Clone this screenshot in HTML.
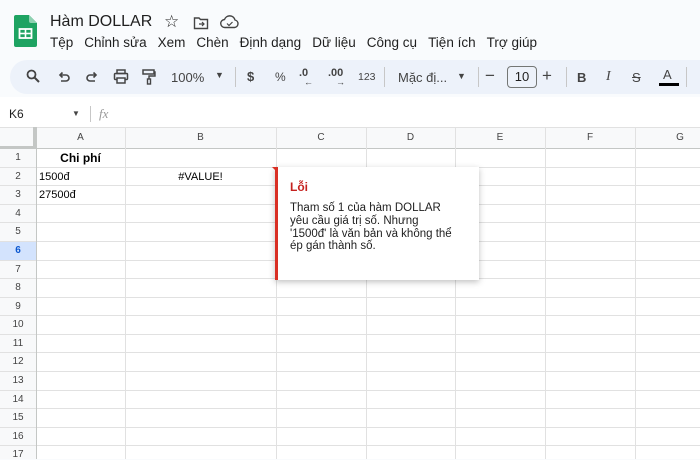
<!DOCTYPE html>
<html><head><meta charset="utf-8"><style>
*{margin:0;padding:0;box-sizing:border-box}
body{width:700px;height:459px;overflow:hidden;background:#f9fbfd;font-family:"Liberation Sans",Arial,sans-serif;color:#1f1f1f;position:relative}
.a{position:absolute;white-space:nowrap}
.menu span{margin-right:11px}
.tb{position:absolute;left:10px;top:60px;width:720px;height:34px;background:#edf2fa;border-radius:17px}
.ic{position:absolute;top:68px}
.sep{position:absolute;top:67px;width:1px;height:20px;background:#c7c7c7}
.grid{position:absolute;left:0;top:127px;width:700px;height:332px;background:#fff}
.hl{position:absolute;left:0;width:700px;height:1px;background:#e1e1e1}
.vl{position:absolute;top:127px;width:1px;height:332px;background:#e1e1e1}
.rn{position:absolute;left:0;width:36px;text-align:center;font-size:10px;color:#444}
.ch{position:absolute;top:132px;font-size:10px;color:#444;text-align:center}
.cell{position:absolute;font-size:11px;color:#000}
</style></head><body>
<svg class="a" style="left:14px;top:15px" width="23" height="32" viewBox="0 0 23 32"><path d="M2 0h13l8 8v22a2 2 0 0 1-2 2H2a2 2 0 0 1-2-2V2a2 2 0 0 1 2-2z" fill="#1ea362"/><path d="M15 0v6a2 2 0 0 0 2 2h6z" fill="#8ed1b1"/><rect x="5.5" y="14" width="12" height="9" fill="none" stroke="#fff" stroke-width="1.8"/><line x1="5.5" y1="18.5" x2="17.5" y2="18.5" stroke="#fff" stroke-width="1.6"/><line x1="11.5" y1="14" x2="11.5" y2="23" stroke="#fff" stroke-width="1.6"/></svg>
<div class="a" style="left:50px;top:13px;font-size:16px;color:#1f1f1f">Hàm DOLLAR</div>
<div class="a" style="left:164px;top:12px;font-size:17px">☆</div>
<svg class="a" style="left:193px;top:16px" width="16" height="14" viewBox="0 0 16 14"><path d="M1.5 2h4.5l1.5 1.5h7v9h-13z" fill="none" stroke="#444" stroke-width="1.4"/><path d="M6 8h5M9 6l2 2-2 2" fill="none" stroke="#444" stroke-width="1.2"/></svg>
<svg class="a" style="left:220px;top:15px" width="19" height="14" viewBox="0 0 19 14"><path d="M5 12.5a4 4 0 0 1-.5-8A5.5 5.5 0 0 1 15 5a3.8 3.8 0 0 1-.5 7.5z" fill="none" stroke="#444" stroke-width="1.4"/><path d="M7 8.5l2 2 3.5-3.5" fill="none" stroke="#444" stroke-width="1.2"/></svg>
<div class="a menu" style="left:50px;top:35px;font-size:13.5px;color:#1f1f1f"><span>Tệp</span><span>Chỉnh sửa</span><span>Xem</span><span>Chèn</span><span>Định dạng</span><span>Dữ liệu</span><span>Công cụ</span><span>Tiện ích</span><span>Trợ giúp</span></div>

<div class="tb"></div>
<svg class="ic" style="left:26px;top:69px" width="15" height="15" viewBox="0 0 15 15"><circle cx="5.5" cy="5.5" r="4" fill="none" stroke="#444" stroke-width="1.8"/><path d="M8.5 8.5l4.5 4.5" stroke="#444" stroke-width="2"/></svg>
<svg class="ic" style="left:57px;top:70px" width="14" height="14" viewBox="0 0 14 14"><path d="M3 5h6a3 3 0 0 1 0 6H4" fill="none" stroke="#444" stroke-width="1.6"/><path d="M5.5 2.5L3 5l2.5 2.5" fill="none" stroke="#444" stroke-width="1.6"/></svg>
<svg class="ic" style="left:85px;top:70px" width="14" height="14" viewBox="0 0 14 14"><path d="M11 5H5a3 3 0 0 0 0 6h5" fill="none" stroke="#444" stroke-width="1.6"/><path d="M8.5 2.5L11 5 8.5 7.5" fill="none" stroke="#444" stroke-width="1.6"/></svg>
<svg class="ic" style="left:113px;top:69px" width="16" height="15" viewBox="0 0 16 15"><rect x="4" y="1" width="8" height="3.5" fill="none" stroke="#444" stroke-width="1.5"/><rect x="1.5" y="4.5" width="13" height="6" rx="1" fill="none" stroke="#444" stroke-width="1.5"/><rect x="4" y="9" width="8" height="5" fill="#edf2fa" stroke="#444" stroke-width="1.5"/></svg>
<svg class="ic" style="left:142px;top:69px" width="14" height="16" viewBox="0 0 14 16"><rect x="1" y="1" width="11" height="4" fill="none" stroke="#444" stroke-width="1.5"/><path d="M12 3h1v4H7v3" fill="none" stroke="#444" stroke-width="1.4"/><rect x="5.5" y="10" width="3" height="5" fill="none" stroke="#444" stroke-width="1.4"/></svg>
<div class="a" style="left:171px;top:70px;font-size:13px;color:#444">100%</div>
<div class="a" style="left:215px;top:70px;font-size:9px;color:#444">▼</div>
<div class="sep" style="left:235px"></div>
<div class="a" style="left:247px;top:69px;font-size:13px;color:#444;font-weight:bold">$</div>
<div class="a" style="left:275px;top:70px;font-size:12px;color:#444">%</div>
<div class="a" style="left:299px;top:67px;font-size:11px;color:#444;font-weight:bold">.0</div>
<div class="a" style="left:304px;top:77px;font-size:9px;color:#444">←</div>
<div class="a" style="left:328px;top:67px;font-size:11px;color:#444;font-weight:bold">.00</div>
<div class="a" style="left:336px;top:77px;font-size:9px;color:#444">→</div>
<div class="a" style="left:358px;top:71px;font-size:10.5px;color:#444">123</div>
<div class="sep" style="left:384px"></div>
<div class="a" style="left:398px;top:70px;font-size:13px;color:#444">Mặc đị...</div>
<div class="a" style="left:457px;top:71px;font-size:9px;color:#444">▼</div>
<div class="sep" style="left:478px"></div>
<div class="a" style="left:485px;top:66px;font-size:17px;color:#444">−</div>
<div class="a" style="left:507px;top:66px;width:30px;height:22px;border:1px solid #747775;border-radius:4px;font-size:13px;color:#1f1f1f;text-align:center;line-height:20px">10</div>
<div class="a" style="left:542px;top:66px;font-size:17px;color:#444">+</div>
<div class="sep" style="left:566px"></div>
<div class="a" style="left:577px;top:70px;font-size:13px;color:#444;font-weight:bold">B</div>
<div class="a" style="left:606px;top:69px;font-size:14px;color:#444;font-style:italic;font-family:'Liberation Serif',serif">I</div>
<div class="a" style="left:632px;top:70px;font-size:13px;color:#444;text-decoration:line-through">S</div>
<div class="a" style="left:663px;top:67px;font-size:13px;color:#444">A</div>
<div class="a" style="left:659px;top:83px;width:20px;height:3px;background:#000"></div>
<div class="sep" style="left:686px"></div>

<div class="a" style="left:0;top:97px;width:700px;height:30px;background:#fff"></div>
<div class="a" style="left:9px;top:107px;font-size:12px;color:#1f1f1f">K6</div>
<div class="a" style="left:72px;top:109px;font-size:8px;color:#444">▼</div>
<div class="a" style="left:90px;top:106px;width:1px;height:16px;background:#c7c7c7"></div>
<div class="a" style="left:99px;top:106px;font-size:13px;color:#999;font-style:italic;font-family:'Liberation Serif',serif">fx</div>

<div class="grid"></div>
<div class="a" style="left:0;top:127px;width:700px;height:21px;background:#f8f9fa"></div>
<div class="a" style="left:0;top:127px;width:36px;height:332px;background:#f8f9fa"></div>
<div class="a" style="left:0;top:241px;width:36px;height:19px;background:#d3e3fd"></div>
<div class="hl" style="top:127px"></div>
<div class="hl" style="top:148px;background:#c4c7c5"></div>
<div class="a" style="left:0;top:127px;width:36px;height:22px;border-right:3px solid #c4c7c5;border-bottom:3px solid #c4c7c5"></div>
<div class="hl" style="top:167px"></div><div class="hl" style="top:185px"></div><div class="hl" style="top:204px"></div><div class="hl" style="top:222px"></div><div class="hl" style="top:241px"></div><div class="hl" style="top:260px"></div><div class="hl" style="top:278px"></div><div class="hl" style="top:297px"></div><div class="hl" style="top:315px"></div><div class="hl" style="top:334px"></div><div class="hl" style="top:352px"></div><div class="hl" style="top:371px"></div><div class="hl" style="top:390px"></div><div class="hl" style="top:408px"></div><div class="hl" style="top:427px"></div><div class="hl" style="top:445px"></div>
<div class="vl" style="left:36px;background:#c4c7c5"></div><div class="vl" style="left:125px"></div><div class="vl" style="left:276px"></div><div class="vl" style="left:366px"></div><div class="vl" style="left:455px"></div><div class="vl" style="left:545px"></div><div class="vl" style="left:635px"></div>
<div class="ch" style="left:36px;width:89px">A</div><div class="ch" style="left:125px;width:151px">B</div><div class="ch" style="left:276px;width:90px">C</div><div class="ch" style="left:366px;width:89px">D</div><div class="ch" style="left:455px;width:90px">E</div><div class="ch" style="left:545px;width:90px">F</div><div class="ch" style="left:635px;width:90px">G</div>
<div class="rn" style="top:152px">1</div><div class="rn" style="top:171px">2</div><div class="rn" style="top:189px">3</div><div class="rn" style="top:208px">4</div><div class="rn" style="top:226px">5</div><div class="rn" style="top:245px;font-weight:bold;color:#0b57d0">6</div><div class="rn" style="top:264px">7</div><div class="rn" style="top:282px">8</div><div class="rn" style="top:301px">9</div><div class="rn" style="top:319px">10</div><div class="rn" style="top:338px">11</div><div class="rn" style="top:356px">12</div><div class="rn" style="top:375px">13</div><div class="rn" style="top:394px">14</div><div class="rn" style="top:412px">15</div><div class="rn" style="top:431px">16</div><div class="rn" style="top:449px">17</div>
<div class="cell" style="left:36px;width:89px;top:151px;text-align:center;font-weight:bold;font-size:12px">Chi phí</div>
<div class="cell" style="left:39px;top:171px">1500đ</div>
<div class="cell" style="left:39px;top:189px">27500đ</div>
<div class="cell" style="left:125px;width:151px;top:171px;text-align:center">#VALUE!</div>

<div class="a" style="left:275px;top:167px;width:204px;height:113px;background:#fff;border-left:3px solid #d93025;box-shadow:0 2px 6px rgba(0,0,0,.25)"></div>
<svg class="a" style="left:272px;top:167px" width="6" height="6"><path d="M0 0h6v6z" fill="#d93025"/></svg>
<div class="a" style="left:290px;top:180px;font-size:12px;color:#c5221f;font-weight:bold">Lỗi</div>
<div class="a" style="left:290px;top:202px;font-size:11.5px;line-height:12.8px;color:#1f1f1f">Tham số 1 của hàm DOLLAR<br>yêu cầu giá trị số. Nhưng<br>'1500đ' là văn bản và không thể<br>ép gán thành số.</div>
</body></html>
